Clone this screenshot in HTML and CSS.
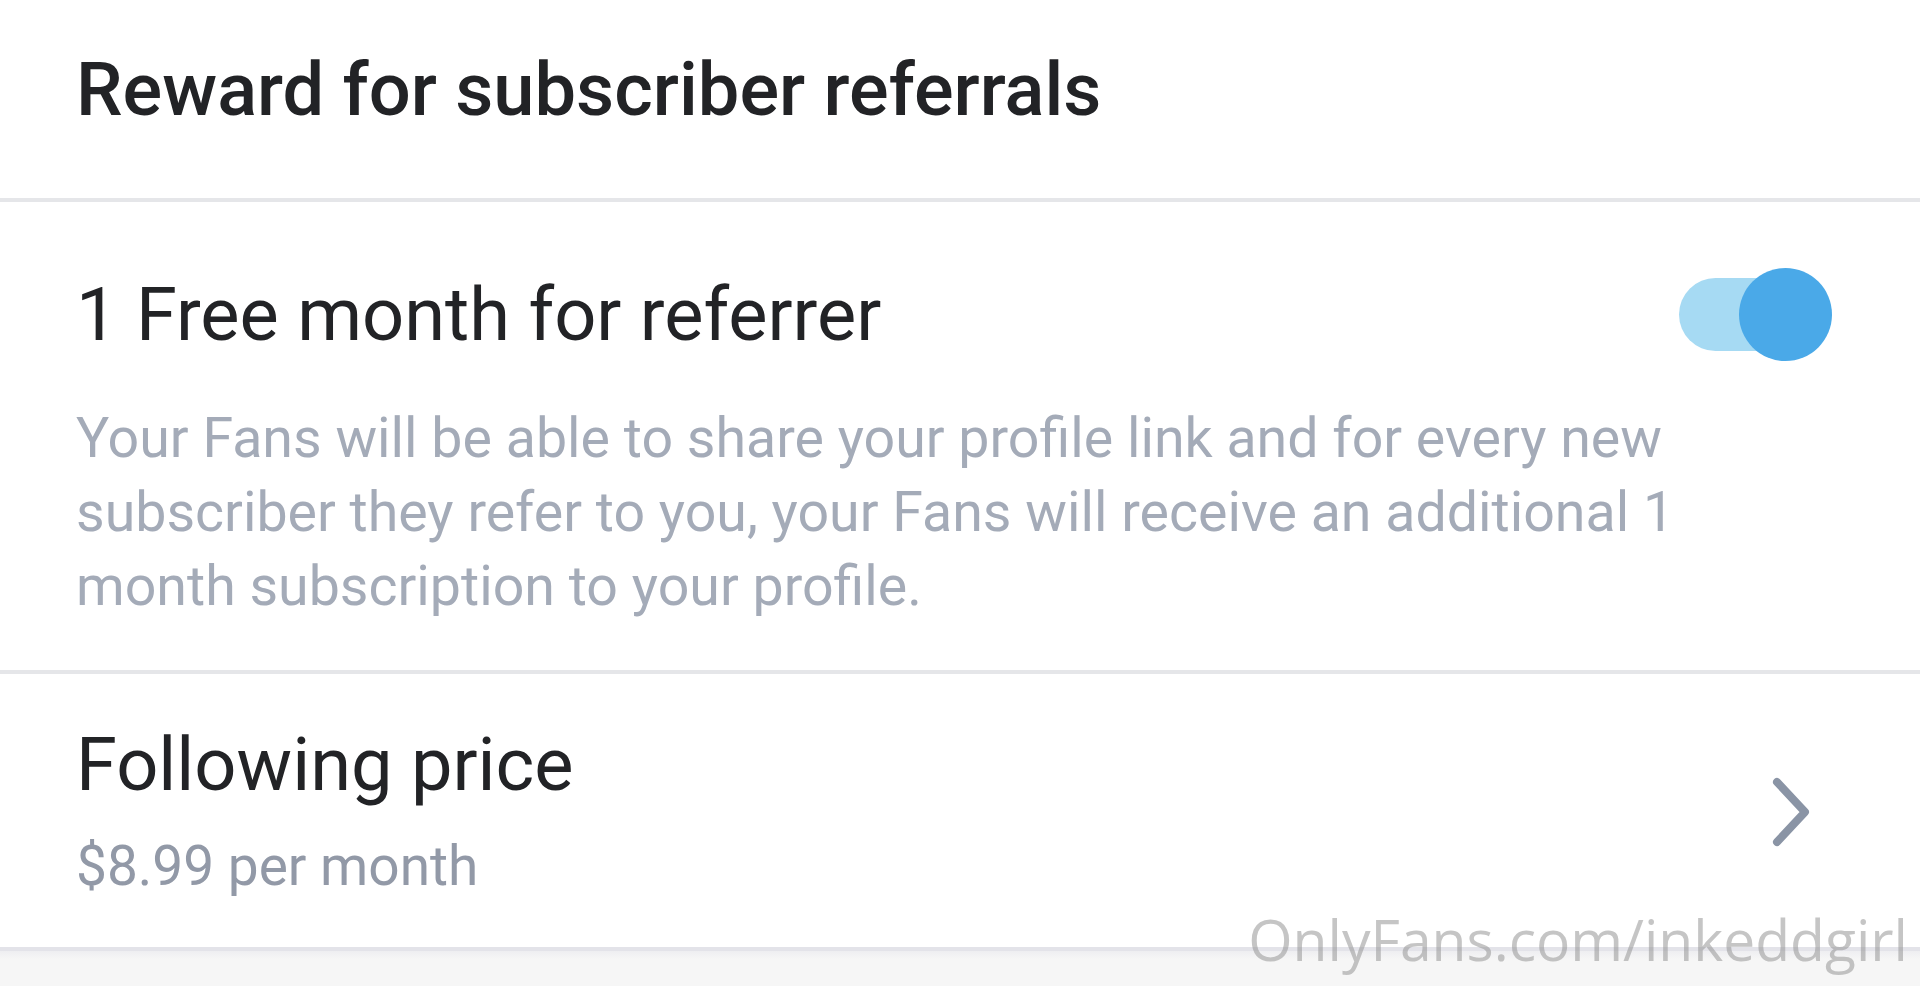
FILE: index.html
```html
<!DOCTYPE html>
<html lang="en">
<head>
    <meta charset="UTF-8">
    <meta name="viewport" content="width=device-width, initial-scale=1.0">
    <title>Subscription settings</title>
    <link rel="stylesheet" href="styles.css">
</head>
<body>

    <div class="page">
        <div class="section-head">
            <h1>Reward for subscriber referrals</h1>
        </div>

        <div class="setting">
            <div class="setting-row">
                <span class="setting-title">1 Free month for referrer</span>
                <label class="toggle">
                    <input type="checkbox" checked>
                    <span class="track"></span>
                    <span class="knob"></span>
                </label>
            </div>
            <p class="setting-desc">Your Fans will be able to share your profile link and for every new subscriber they refer to you, your Fans will receive an additional 1 month subscription to your profile.</p>
        </div>

        <a class="setting link-row" href="#">
            <div>
                <div class="setting-title">Following price</div>
                <div class="setting-value">$8.99 per month</div>
            </div>
            <svg class="chevron" width="46" height="74" viewBox="0 0 46 74">
                <path d="M8 7 L36 37 L8 67" fill="none" stroke="#8a94a5" stroke-width="8" stroke-linecap="round" stroke-linejoin="round"/>
            </svg>
        </a>

        <div class="footer-space"></div>
    </div>

    <div class="watermark">OnlyFans.com/inkeddgirl</div>

</body>
</html>
```
FILE: styles.css
```css
body {
    margin: 0;
    padding: 0;
    background: #fff;
    font-family: Roboto, "Noto Sans", Arial, sans-serif;
    color: #222326;
    overflow: hidden;
}
.page {
    width: 1920px;
    height: 986px;
    display: flex;
    flex-direction: column;
}
.section-head {
    padding: 46px 76px 64px;
    border-bottom: 4px solid #e5e6e9;
}
.section-head h1 {
    margin: 0;
    font-size: 74px;
    line-height: 88px;
    font-weight: 500;
}
.setting {
    padding: 66px 88px 46px 76px;
    border-bottom: 4px solid #e5e6e9;
}
.setting-row {
    display: flex;
    justify-content: space-between;
    align-items: center;
}
.setting-title {
    font-size: 74px;
    line-height: 88px;
    font-weight: 400;
}
.setting-desc {
    margin: 41px 0 0;
    max-width: 1680px;
    font-size: 55.5px;
    line-height: 74px;
    color: #a4abb8;
}
.toggle {
    position: relative;
    width: 153px;
    height: 93px;
    cursor: pointer;
}
.toggle input {
    display: none;
}
.track {
    position: absolute;
    left: 0;
    top: 10px;
    width: 140px;
    height: 73px;
    border-radius: 37px;
    background: #a6daf3;
}
.knob {
    position: absolute;
    right: 0;
    top: 0;
    width: 93px;
    height: 93px;
    border-radius: 50%;
    background: #4aa9e8;
}
.link-row {
    display: flex;
    justify-content: space-between;
    align-items: center;
    padding: 47px 105px 44px 76px;
    color: inherit;
    text-decoration: none;
    border-bottom: 4px solid #e3e3e9;
}
.setting-value {
    margin-top: 20px;
    font-size: 55px;
    line-height: 74px;
    color: #9299a7;
}
.footer-space {
    flex: 1;
    background: linear-gradient(#eeeef1, #f6f6f6 8px);
}
.watermark {
    position: absolute;
    right: 12px;
    top: 904px;
    font-family: "Open Sans", sans-serif;
    font-size: 57px;
    line-height: 70px;
    color: rgba(150, 150, 150, 0.55);
    white-space: nowrap;
}
```
